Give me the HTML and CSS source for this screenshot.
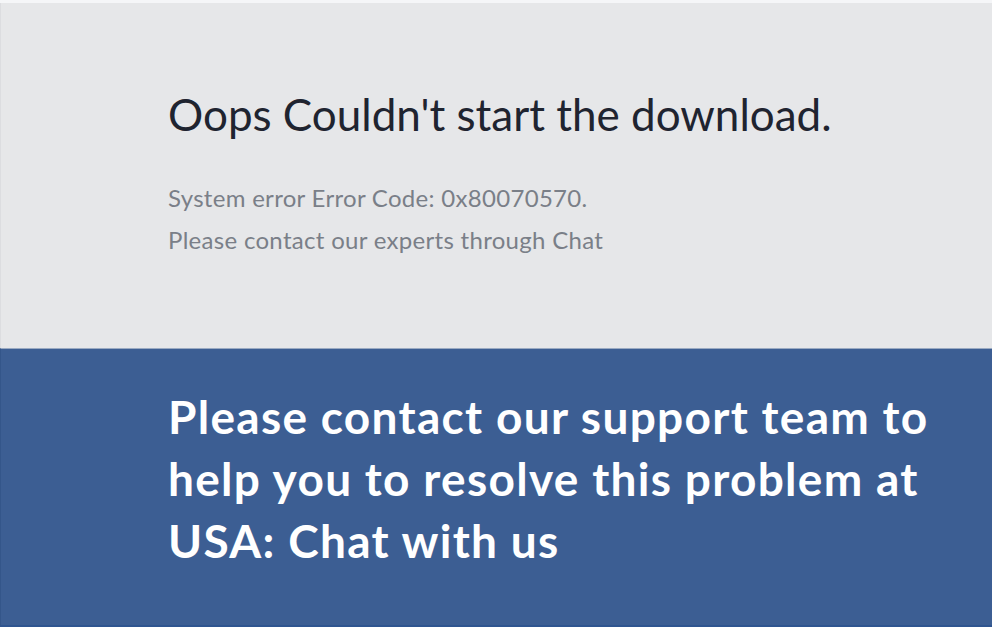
FILE: index.html
```html
<!doctype html>
<html lang="en">
  <head>
    <meta charset="UTF-8" />
    <meta name="viewport" content="width=device-width, initial-scale=1.0" />
    <title>Download error</title>
    <link rel="stylesheet" href="styles.css">
  </head>
  <body>
    <section class="error-box">
      <h1 class="error-title">Oops Couldn't start the download.</h1>
      <p class="error-text">System error Error Code: 0x80070570.</p>
      <p class="error-text">Please contact our experts through Chat</p>
    </section>

    <section class="support-box">
      <h2 class="support-text">
        Please contact our support team to<br />
        help you to resolve this problem at<br />
        USA: Chat with us
      </h2>
    </section>
  </body>
</html>
```

FILE: styles.css
```css
/* Reset and general styles */
* {
  margin: 0;
  padding: 0;
  box-sizing: border-box;
  font-family: "Lato", "Liberation Sans", sans-serif;
}

html,
body {
  height: 100%;
}

body {
  display: flex;
  flex-direction: column;
  background-color: #f5f6f8;
  padding-top: 3px;
}

/* Error section */
.error-box {
  height: 345px;
  background-color: #e6e7e9;
  border-left: 1px solid #dcdde0;
  padding: 83px 0 0 167px;
}

.error-title {
  font-size: 44px;
  font-weight: 400;
  color: #1f2430;
  line-height: 56px;
  margin-bottom: 35px;
}

.error-text {
  font-size: 24px;
  letter-spacing: 0.3px;
  color: #7a7f88;
  line-height: 42px;
}

/* Support section */
.support-box {
  flex: 1;
  background-color: #3c5e93;
  border-top: 1px solid #9aaac2;
  border-left: 1px solid #34568a;
  border-bottom: 2px solid #2f5590;
  padding: 37px 0 0 167px;
}

.support-text {
  font-size: 46px;
  font-weight: 700;
  letter-spacing: 1.3px;
  color: #ffffff;
  line-height: 62px;
}
```
